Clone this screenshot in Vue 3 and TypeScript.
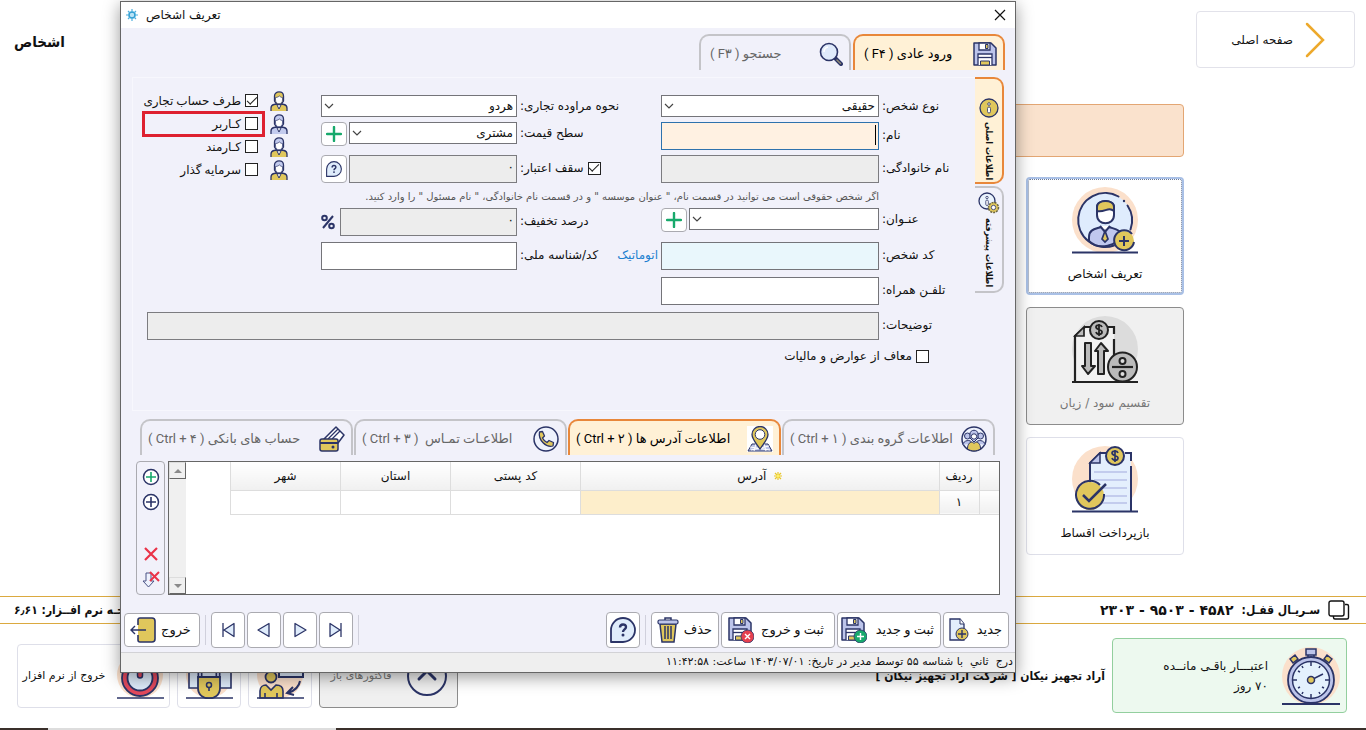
<script setup lang="ts">
import { ref } from 'vue'

interface Role { label: string; checked: boolean; hair: string; body: string; marked?: boolean }
interface Tab { label: string; icon: string }

const gold = '#e0c75c'
const lilac = '#c3cbee'

const roles = ref<Role[]>([
  { label: 'طرف حساب تجاری', checked: true, hair: gold, body: gold },
  { label: 'کـاربر', checked: false, hair: lilac, body: lilac, marked: true },
  { label: 'کـارمند', checked: false, hair: lilac, body: gold },
  { label: 'سرمایه گذار', checked: false, hair: lilac, body: gold },
])

const detailTabs: Tab[] = [
  { label: 'اطلاعات گروه بندی ( Ctrl + ۱ )', icon: 'group' },
  { label: 'اطلاعات آدرس ها ( Ctrl + ۲ )', icon: 'pin' },
  { label: 'اطلاعـات تمـاس \u00a0( Ctrl + ۳ )', icon: 'phone' },
  { label: 'حساب های بانکی ( Ctrl + ۴ )', icon: 'cards' },
]
const activeDetail = ref(1)
const creditLimit = ref(true)
const taxExempt = ref(false)
const pager: Tab[] = [
  { label: 'آخرین', icon: 'last' },
  { label: 'بعدی', icon: 'next' },
  { label: 'قبلی', icon: 'prev' },
  { label: 'اولین', icon: 'first' },
]
</script>

<template>
  <div class="page" dir="rtl">
    <svg class="defs" aria-hidden="true">
      <symbol id="save" viewBox="0 0 24 24">
        <path d="M1 1h17l5 5v17H1z" fill="#bcc4ea" stroke="#2b3467" stroke-width="1.5" stroke-linejoin="round" />
        <path d="M6 1h11v7H6z" fill="#fff" stroke="#2b3467" stroke-width="1.3" />
        <path d="M12.500 2.500h2.500v4h-2.500z" fill="#e0c75c" stroke="#2b3467" />
        <path d="M5 23V12h14v11" fill="#fff" stroke="#2b3467" stroke-width="1.3" />
        <path d="M5 15.500h14" stroke="#2b3467" stroke-width="1.300" />
        <path d="M7.500 23v-4h9v4z" fill="#e0c75c" stroke="#2b3467" />
      </symbol>
      <symbol id="search" viewBox="0 0 24 24">
        <path d="M16 16l6 6" stroke="#2b3467" stroke-width="4" stroke-linecap="round" />
        <path d="M18 18l3.500 3.500" stroke="#8f8a76" stroke-width="1.500" stroke-linecap="round" />
        <circle cx="10" cy="10" r="8.500" fill="#dfeafb" stroke="#2b3467" stroke-width="1.600" />
        <path d="M5 10a5 5 0 0 1 4-5" fill="none" stroke="#fff" stroke-width="1.500" />
      </symbol>
      <symbol id="plus" viewBox="0 0 16 16">
        <path d="M8 1v14M1 8h14" stroke="#17a96c" stroke-width="2.400" stroke-linecap="round" />
      </symbol>
      <symbol id="help" viewBox="0 0 26 26">
        <path d="M1 25V13a12 12 0 1 1 12 12z" fill="#dfecfb" stroke="#2b3467" stroke-width="1.800" stroke-linejoin="round" />
        <path d="M10 10.500c0-4 6-4 6-.5 0 2.500-3 2.300-3 5" fill="none" stroke="#2b3467" stroke-width="2.400" />
        <circle cx="13" cy="18" r="1.500" fill="#2b3467" />
      </symbol>
      <symbol id="group" viewBox="0 0 26 26">
        <circle cx="13" cy="13" r="12" fill="#eef2fd" stroke="#2b3467" stroke-width="1.500" />
        <g fill="#bcc4ea" stroke="#2b3467">
          <circle cx="6.500" cy="10" r="3" /><circle cx="19.500" cy="10" r="3" />
          <path d="M2 19c0-5 8-6 9-2M24 19c0-5-8-6-9-2" />
          <path d="M9 12V8c0-5 8-5 8 0v4l-4 4z" />
        </g>
        <circle cx="13" cy="10.500" r="2.700" fill="#fff" stroke="#2b3467" />
        <path d="M6.500 23c0-6 3-7 5-7l1.500 1.500L14.500 16c2 0 5 1 5 7-4 2.500-9 2.500-13 0z" fill="#e0c75c" stroke="#2b3467" />
      </symbol>
      <symbol id="pin" viewBox="0 0 26 26">
        <path d="M0 0h26v26H0z" fill="#fff" />
        <path d="M5 18h16l4 7H1z" fill="#bcc4ea" stroke="#2b3467" />
        <path d="M9 18l-2 7M17 18l2 7M3 21l20 3M22 20L4 24" stroke="#fff" />
        <path d="M13 23C9 17 5 13 5 8.500a8 8 0 0 1 16 0C21 13 17 17 13 23z" fill="#e0c75c" stroke="#2b3467" stroke-width="1.300" />
        <circle cx="13" cy="8.500" r="4.800" fill="#fff" stroke="#2b3467" />
      </symbol>
      <symbol id="phone" viewBox="0 0 26 26">
        <circle cx="13" cy="13" r="12" fill="#eef2fd" stroke="#2b3467" stroke-width="1.500" />
        <path d="M6.500 6l3-.500 2 4.500-2 2c1 2 2.500 3.500 4.500 4.500l2-2 4.500 2-.500 3.500c-7 2-15-6-13.500-14z" fill="#e0c75c" stroke="#2b3467" stroke-width="1.300" stroke-linejoin="round" />
      </symbol>
      <symbol id="cards" viewBox="0 0 26 26">
        <path d="M5 13L17 1l8 8-6 8z" fill="#fff" stroke="#2b3467" stroke-width="1.500" stroke-linejoin="round" />
        <path d="M9 13L19 3M13 13l8-8" stroke="#2b3467" stroke-width="1.300" />
        <rect x="1" y="13" width="18" height="12" rx="2" fill="#e0c75c" stroke="#2b3467" stroke-width="1.500" />
        <path d="M1 17h18" stroke="#2b3467" stroke-width="2" /><circle cx="14" cy="21" r="1.500" fill="#2b3467" />
      </symbol>
      <symbol id="person" viewBox="0 0 18 20">
        <path d="M1 20v-3c0-2 1-3 3-3.500l3-.5h4l3 .5c2 .5 3 1.500 3 3.500v3" style="fill: var(--body)" stroke="#2b3467" stroke-width="1.300" />
        <path d="M6.500 13L9 18l2.500-5" fill="#fff" stroke="#2b3467" />
        <path d="M4.500 10V5c0-5.500 9-5.500 9 0v5c-1 2-2 3-3 3.500h-3C6.500 13 5.500 12 4.500 10z" style="fill: var(--hair)" stroke="#2b3467" stroke-width="1.300" />
        <path d="M5.500 6.500C8 6.500 9 5 9.500 5c1 1 2 1.500 3 1.500V9c0 5-7 5-7 0z" fill="#fff" stroke="#2b3467" stroke-width=".7" />
      </symbol>
      <symbol id="first" viewBox="0 0 16 16"><path d="M3 1v14M14 1.500v13L4 8z" fill="#dfecfb" stroke="#2b3467" stroke-width="1.300" stroke-linejoin="round" /></symbol>
      <symbol id="last" viewBox="0 0 16 16"><path d="M13 1v14M2 1.500v13L12 8z" fill="#dfecfb" stroke="#2b3467" stroke-width="1.300" stroke-linejoin="round" /></symbol>
      <symbol id="next" viewBox="0 0 16 16"><path d="M3 1.500v13L14 8z" fill="#dfecfb" stroke="#2b3467" stroke-width="1.300" stroke-linejoin="round" /></symbol>
      <symbol id="prev" viewBox="0 0 16 16"><path d="M13 1.500v13L2 8z" fill="#dfecfb" stroke="#2b3467" stroke-width="1.300" stroke-linejoin="round" /></symbol>
      <symbol id="chevron" viewBox="0 0 10 6"><path d="M1 1l4 4 4-4" fill="none" stroke="#444" stroke-width="1.200" /></symbol>
    </svg>

    <header class="top">
      <button class="home" type="button">
        <svg width="20" height="36" viewBox="0 0 20 36"><path d="M2 2l16 16L2 34" fill="none" stroke="#eda92c" stroke-width="2.500" stroke-linecap="round" /></svg>
        <span>صفحه اصلی</span>
      </button>
      <h1>اشخاص</h1>
    </header>

    <main class="content">
      <div class="banner"></div>
      <nav class="cards">
        <button class="card focused" type="button">
          <svg width="66" height="67" viewBox="0 0 66 67">
            <circle cx="33" cy="33" r="33" fill="#fbe0cb" />
            <circle cx="33" cy="33" r="27" fill="#dfecfd" />
            <path d="M46.500 9.500A27 27 0 1 0 42 58.500M55.500 18.500a27 27 0 0 1 3 24" fill="none" stroke="#2b3467" stroke-width="2" stroke-linecap="round" />
            <circle cx="52" cy="14" r="1.200" fill="#2b3467" />
            <path d="M17 54v-4c0-8 7-8 12-10h8c5 2 12 2 12 9-3 9-22 15-32 5z" fill="#c0c8ee" stroke="#2b3467" stroke-width="2" />
            <path d="M28 39l5 6 5-6" fill="#fff" stroke="#2b3467" stroke-width="2" />
            <path d="M33 44l-3 8 3 3 3-3z" fill="#e0c75c" stroke="#2b3467" stroke-width="1.700" />
            <path d="M25 20c0-8 17-8 17 0v8c0 11-17 11-17 0z" fill="#fff" stroke="#2b3467" stroke-width="2" />
            <path d="M25 24v-4c0-8 17-8 17 0v4c-6-5-9 2-17 0z" fill="#e0c75c" stroke="#2b3467" stroke-width="2" />
            <circle cx="52" cy="54" r="10" fill="#e0c75c" /><path d="M60 47A10 10 0 1 0 62 55" fill="none" stroke="#2b3467" stroke-width="2" />
            <path d="M52 49v10M47 54h10" stroke="#2b3467" stroke-width="2" />
            <path d="M0 65.500h66" stroke="#2b3467" stroke-width="2" />
          </svg>
          <span>تعریف اشخاص</span>
        </button>
        <button class="card off" type="button" disabled>
          <svg width="66" height="67" viewBox="0 0 66 67">
            <circle cx="33" cy="33" r="33" fill="#dcdcdc" />
            <path d="M3 65V20l10-9h29v55H3z" fill="#f1f1f1" />
            <path d="M3 65V20l10-9h6M36 11h6v7M42 23v16" fill="none" stroke="#222" stroke-width="2.200" />
            <path d="M3 20h9v-9z" fill="#bbb" stroke="#222" stroke-width="1.700" />
            <circle cx="27" cy="14" r="9" fill="#bbb" stroke="#222" stroke-width="2" />
            <path d="M30 11c-1-3-6-2-6 0 0 3 6 2 6 5 0 3-5 3-6 0M27 8v12" fill="none" stroke="#222" stroke-width="1.800" />
            <path d="M13 27h6v23h4l-7 8-6-8h3zM26 58V35h-3l6-8 7 8h-4v23z" fill="#bbb" stroke="#222" stroke-width="2" stroke-linejoin="round" />
            <circle cx="50.500" cy="51" r="14.500" fill="#bbb" stroke="#222" stroke-width="2" />
            <path d="M40 51h21" stroke="#222" stroke-width="2.200" /><circle cx="50.500" cy="45" r="3" fill="#ddd" stroke="#222" stroke-width="2" /><circle cx="50.500" cy="58" r="3" fill="#ddd" stroke="#222" stroke-width="2" />
            <path d="M0 66h66" stroke="#222" stroke-width="2" />
          </svg>
          <span>تقسیم سود / زیان</span>
        </button>
        <button class="card" type="button">
          <svg width="66" height="67" viewBox="0 0 66 67">
            <circle cx="33" cy="33" r="33" fill="#fbe0cb" />
            <path d="M18 65V17L28 7h31v58z" fill="#e4effd" />
            <path d="M18 39V17L28 7h6M53 7h6v8M59 20v45" fill="none" stroke="#2b3467" stroke-width="2" />
            <path d="M18 17h10V7z" fill="#bcc4ea" stroke="#2b3467" stroke-width="1.500" />
            <path d="M22 26h33M22 34h33M30 42h25M32 50h23M30 57h25" stroke="#b8c1e8" stroke-width="1.500" />
            <circle cx="43" cy="10" r="9" fill="#e0c75c" stroke="#2b3467" stroke-width="2" />
            <path d="M46 7c-1-3-6-2-6 0 0 3 6 2 6 5 0 3-5 3-6 0M43 4v12" fill="none" stroke="#2b3467" stroke-width="1.700" />
            <circle cx="18" cy="50" r="14" fill="#e0c75c" /><path d="M28 39A14 14 0 1 0 32 48" fill="none" stroke="#2b3467" stroke-width="2" />
            <path d="M11 49l6 6 17-17" fill="none" stroke="#2b3467" stroke-width="2.500" />
            <path d="M0 65.500h66" stroke="#2b3467" stroke-width="2" />
          </svg>
          <span>بازپرداخت اقساط</span>
        </button>
      </nav>
    </main>

    <section class="serial">
      <div class="serial-id">
        <svg width="22" height="20" viewBox="0 0 22 20"><path d="M17 4.500h2a1.500 1.500 0 0 1 1.500 1.500v11.500a1.500 1.500 0 0 1-1.500 1.500H7a1.500 1.500 0 0 1-1.500-1.500V16" fill="none" stroke="#111" stroke-width="1.400" /><rect x="1" y="1" width="15" height="15" rx="2" fill="#fff" stroke="#111" stroke-width="1.400" /></svg>
        <b>سـریـال قفـل:</b>
        <b class="number">۴۵۸۲ - ۹۵۰۳ - ۲۳۰۳</b>
      </div>
      <b>نسخـه نرم افــزار: ۶٫۶۱</b>
    </section>

    <footer class="bottom">
      <div class="credit">
        <svg width="58" height="58" viewBox="0 0 58 58">
          <circle cx="29" cy="29" r="29" fill="#fbe0cb" />
          <path d="M24 2h10v6H24zM26 8h6v4h-6z" fill="#bcc4ea" stroke="#2b3467" stroke-width="1.500" />
          <path d="M8 12l5-4 3 4-5 4zM50 12l-5-4-3 4 5 4z" fill="#e0c75c" stroke="#2b3467" stroke-width="1.500" />
          <circle cx="29" cy="33" r="23" fill="#bcc4ea" stroke="#2b3467" stroke-width="1.800" />
          <circle cx="29" cy="33" r="18.500" fill="#e4f1fd" stroke="#2b3467" stroke-width="1.500" />
          <path d="M29 15v4M29 47v4M11 33h4M43 33h4M29 33l12-6M16 24l2 1M42 41l-2-1M16 41l2-1M20 19l1 2M38 19l-1 2M20 47l1-2M38 47l-1-2" stroke="#2b3467" stroke-width="1.500" />
          <circle cx="29" cy="33" r="3.500" fill="#e0c75c" stroke="#2b3467" stroke-width="1.500" />
          <path d="M0 57h58" stroke="#2b3467" stroke-width="2" />
        </svg>
        <p>اعتبـــار باقـی مانــده<br />۷۰ روز</p>
      </div>
      <b class="company">آراد تجهیز نیکان [ شرکت آراد تجهیز نیکان ]</b>
      <button class="tile off" type="button" disabled>
        <svg width="40" height="40" viewBox="0 0 40 40"><circle cx="20" cy="20" r="19" fill="none" stroke="#2b3467" stroke-width="2" /><path d="M12 23l8-8 8 8" fill="none" stroke="#2b3467" stroke-width="3" stroke-linecap="round" /></svg>
        <span>فاکتورهای باز</span>
      </button>
      <button class="tile icon-only" type="button" aria-label="تعویض کاربر">
        <svg width="47" height="47" viewBox="0 0 47 47">
          <circle cx="23" cy="23" r="23" fill="#fbe0cb" />
          <rect x="22" y="3" width="24" height="22" fill="#dfecfb" stroke="#2b3467" stroke-width="2" />
          <circle cx="14" cy="25" r="5.500" fill="#e0c75c" stroke="#2b3467" stroke-width="1.800" />
          <path d="M3 46v-7c0-4 3-6 6-6l5 5 5-5c4 0 7 2 7 6v7zM8 46v-5M20 46v-5" fill="#e0c75c" stroke="#2b3467" stroke-width="1.600" />
          <path d="M43 29c-1 6-6 10-12 12M36 35l-6 6 7 2" fill="none" stroke="#2b3467" stroke-width="2" />
          <path d="M0 46h47" stroke="#2b3467" stroke-width="1.600" />
        </svg>
      </button>
      <button class="tile icon-only" type="button" aria-label="قفل برنامه">
        <svg width="47" height="47" viewBox="0 0 47 47">
          <circle cx="23" cy="23" r="23" fill="#fbe0cb" />
          <path d="M3 4h42v32H3z" fill="#dfecfb" stroke="#2b3467" stroke-width="1.600" />
          <path d="M14 26v-9c0-11 18-11 18 0v9" fill="none" stroke="#2b3467" stroke-width="5" /><path d="M14 26v-9c0-11 18-11 18 0v9" fill="none" stroke="#bcc4ea" stroke-width="2" />
          <path d="M12 25h22v11c0 14-22 14-22 0z" fill="#e0c75c" stroke="#2b3467" stroke-width="1.800" />
          <circle cx="23" cy="33" r="2.500" fill="none" stroke="#2b3467" stroke-width="1.500" /><path d="M23 35v4M0 46h47" stroke="#2b3467" stroke-width="1.600" />
        </svg>
      </button>
      <button class="tile exit" type="button">
        <svg width="47" height="47" viewBox="0 0 47 47">
          <circle cx="23" cy="23" r="23" fill="#fbe0cb" />
          <circle cx="23" cy="26" r="18" fill="#e3495c" stroke="#2b3467" stroke-width="1.800" />
          <circle cx="23" cy="26" r="12.500" fill="#dfecfb" stroke="#2b3467" stroke-width="1.800" />
          <rect x="20.500" y="10" width="5" height="16" rx="2.500" fill="#e3495c" stroke="#2b3467" stroke-width="1.500" />
          <path d="M0 46h47" stroke="#2b3467" stroke-width="1.600" />
        </svg>
        <span>خروج از نرم افزار</span>
      </button>
    </footer>
    <div class="taskbar"></div>

    <section class="dialog" role="dialog" aria-labelledby="dialog-title">
      <div class="titlebar">
        <button class="close" type="button" aria-label="بستن">
          <svg width="12" height="12" viewBox="0 0 12 12"><path d="M1 1l10 10M11 1L1 11" stroke="#111" stroke-width="1.200" /></svg>
        </button>
        <h2 id="dialog-title">تعریف اشخاص</h2>
        <svg width="12" height="12" viewBox="0 0 12 12"><circle cx="6" cy="6" r="3" fill="#b9e3f6" stroke="#2d9bd0" stroke-width="1.500" /><path d="M6 0v3M6 9v3M0 6h3M9 6h3M2 2l2 2M8 8l2 2M10 2L8 4M4 8l-2 2" stroke="#4db0de" stroke-width="1.200" /></svg>
      </div>

      <div class="modes">
        <button class="tab mode active" type="button"><svg width="24" height="24"><use href="#save" /></svg><span>ورود عادی ( F۴ )</span></button>
        <button class="tab mode" type="button"><svg width="24" height="24"><use href="#search" /></svg><span>جستجو ( F۳ )</span></button>
      </div>

      <div class="sheet">
        <div class="side">
          <button class="side-tab active" type="button">
            <svg width="20" height="20" viewBox="0 0 20 20"><circle cx="10" cy="10" r="9" fill="#e0c75c" stroke="#2b3467" stroke-width="1.300" /><circle cx="10" cy="6" r="1.300" fill="#fff" stroke="#2b3467" stroke-width=".8" /><rect x="8.500" y="9" width="3" height="6" rx="1.500" fill="#fff" stroke="#2b3467" stroke-width=".8" /></svg>
            <span>اطلاعات اصلی</span>
          </button>
          <button class="side-tab" type="button">
            <svg width="22" height="22" viewBox="0 0 22 22"><circle cx="9" cy="9" r="8" fill="#eaf3fd" stroke="#2b3467" stroke-width="1.300" /><circle cx="9" cy="5.500" r="1.200" fill="#fff" stroke="#2b3467" stroke-width=".8" /><rect x="7.800" y="8" width="2.500" height="5.500" rx="1.200" fill="#fff" stroke="#2b3467" stroke-width=".8" /><circle cx="15.500" cy="15.500" r="5" fill="#e0c75c" stroke="#6b6644" stroke-width="1.500" stroke-dasharray="2 1" /><circle cx="15.500" cy="15.500" r="2.200" fill="#fff" stroke="#2b3467" stroke-width=".8" /></svg>
            <span>اطلاعات پیشرفته</span>
          </button>
        </div>

        <form class="form" @submit.prevent>
          <label class="lab r1 c1" for="kind">نوع شخص:</label>
          <div class="pick r1 c2"><select id="kind"><option>حقیقی</option></select><svg width="10" height="6"><use href="#chevron" /></svg></div>
          <label class="lab tall r2 c1" for="fname">نام:</label>
          <div class="current r2 c2"><input id="fname" type="text" /></div>
          <label class="lab tall r3 c1" for="lname">نام خانوادگی:</label>
          <div class="r3 c2"><input id="lname" class="gray" type="text" /></div>
          <p class="hint">اگر شخص حقوقی است می توانید در قسمت نام، " عنوان موسسه " و در قسمت نام خانوادگی، " نام مسئول " را وارد کنید.</p>
          <label class="lab r5 c1" for="honor">عنـوان:</label>
          <div class="pair r5 c2">
            <div class="pick"><select id="honor"><option></option></select><svg width="10" height="6"><use href="#chevron" /></svg></div>
            <button class="mini" type="button" aria-label="افزودن عنوان"><svg width="16" height="16"><use href="#plus" /></svg></button>
          </div>
          <label class="lab tall r6 c1" for="code">کد شخص:</label>
          <div class="r6 c2"><input id="code" class="aqua" type="text" /></div>
          <label class="lab tall r7 c1" for="mobile">تلفـن همراه:</label>
          <div class="r7 c2"><input id="mobile" type="text" /></div>
          <label class="lab tall r8 c1" for="note">توضیحات:</label>
          <div class="note"><input id="note" class="gray" type="text" /></div>
          <label class="tax"><input v-model="taxExempt" type="checkbox" />معاف از عوارض و مالیات</label>

          <label class="lab r1 c3" for="trade">نحوه مراوده تجاری:</label>
          <div class="pick r1 c4"><select id="trade"><option>هردو</option></select><svg width="10" height="6"><use href="#chevron" /></svg></div>
          <label class="lab r2 c3" for="level">سطح قیمت:</label>
          <div class="pair r2 c4">
            <div class="pick"><select id="level"><option>مشتری</option></select><svg width="10" height="6"><use href="#chevron" /></svg></div>
            <button class="mini" type="button" aria-label="افزودن سطح قیمت"><svg width="16" height="16"><use href="#plus" /></svg></button>
          </div>
          <label class="lab tall r3 c3"><input v-model="creditLimit" type="checkbox" />سقف اعتبار:</label>
          <div class="pair r3 c4">
            <input class="gray" type="text" value="۰" aria-label="سقف اعتبار" />
            <button class="mini high" type="button" aria-label="راهنما"><svg width="16" height="16"><use href="#help" /></svg></button>
          </div>
          <label class="lab tall r5 c3" for="off">درصد تخفیف:</label>
          <div class="pair percent r5 c4"><input id="off" class="gray" type="text" value="۰" />
            <svg width="14" height="16" viewBox="0 0 14 16"><g fill="none" stroke="#2b3467" stroke-width="2"><circle cx="3.500" cy="4" r="2.300" /><circle cx="10.500" cy="12" r="2.300" /><path d="M12 2L2 14" /></g></svg>
          </div>
          <label class="lab tall r6 c3" for="nid"><a class="auto" href="#">اتوماتیک</a>کد/شناسه ملی:</label>
          <div class="r6 c4"><input id="nid" type="text" /></div>

          <div class="roles">
            <label v-for="role in roles" :key="role.label" class="role" :class="{ marked: role.marked }">
              <svg width="18" height="20" :style="{ '--hair': role.hair, '--body': role.body }"><use href="#person" /></svg>
              <input v-model="role.checked" type="checkbox" />{{ role.label }}
            </label>
          </div>
        </form>
      </div>

      <div class="details">
        <button v-for="(tab, i) in detailTabs" :key="tab.icon" class="tab" :class="{ active: i === activeDetail }" type="button" @click="activeDetail = i">
          <svg width="26" height="26"><use :href="'#' + tab.icon" /></svg><span>{{ tab.label }}</span>
        </button>
      </div>

      <div class="grid-area">
        <div class="table-box">
          <table>
            <colgroup><col class="w-edge" /><col class="w-row" /><col /><col class="w-post" /><col class="w-place" /><col class="w-place" /></colgroup>
            <thead><tr><th></th><th>ردیف</th>
              <th><svg width="8" height="8" viewBox="0 0 8 8"><path d="M4 0v8M0 4h8M1 1l6 6M7 1L1 7" stroke="#e8c62a" stroke-width="1.200" /><circle cx="4" cy="4" r="1.700" fill="#fff06a" /></svg> آدرس</th>
              <th>کد پستی</th><th>استان</th><th>شهر</th></tr></thead>
            <tbody><tr><td class="fixed"></td><td class="fixed">۱</td><td class="cursor"></td><td></td><td></td><td></td></tr></tbody>
          </table>
          <div class="scroll">
            <button type="button" aria-label="بالا"><svg width="8" height="4" viewBox="0 0 8 4"><path d="M0 4l4-4 4 4z" fill="#8a8a8a" /></svg></button>
            <button type="button" aria-label="پایین"><svg width="8" height="4" viewBox="0 0 8 4"><path d="M0 0l4 4 4-4z" fill="#8a8a8a" /></svg></button>
          </div>
        </div>
        <div class="tools">
          <button type="button" aria-label="افزودن"><svg width="18" height="18" viewBox="0 0 18 18"><circle cx="9" cy="9" r="7.500" fill="#fff" stroke="#2b3467" stroke-width="1.500" /><path d="M9 4v10M4 9h10" stroke="#17a96c" stroke-width="1.600" /></svg></button>
          <button type="button" aria-label="درج"><svg width="18" height="18" viewBox="0 0 18 18"><circle cx="9" cy="9" r="7.500" fill="#fff" stroke="#2b3467" stroke-width="1.500" /><path d="M9 4v10M4 9h10" stroke="#2b3467" stroke-width="1.600" /></svg></button>
          <button class="apart" type="button" aria-label="حذف ردیف"><svg width="18" height="18" viewBox="0 0 18 18"><path d="M3 3l12 12M15 3L3 15" stroke="#ea3348" stroke-width="2.200" /></svg></button>
          <button type="button" aria-label="حذف همه"><svg width="18" height="18" viewBox="0 0 18 18"><path d="M4 3h5v8h3l-5.500 6L1 11h3z" fill="#eef2fd" stroke="#4a5285" /><path d="M8 2l9 9M17 2l-9 9" stroke="#ea3348" stroke-width="2" /></svg></button>
        </div>
      </div>

      <div class="actions">
        <button class="act" type="button"><svg width="20" height="24" viewBox="0 0 20 24"><path d="M1 1h10l4 5v16H1z" fill="#e3eefc" stroke="#2b3467" stroke-width="1.300" /><path d="M11 1v5h4" fill="#fff" stroke="#2b3467" /><circle cx="13" cy="16" r="6" fill="#e0c75c" stroke="#2b3467" /><path d="M13 12v8M9 16h8" stroke="#2b3467" stroke-width="1.400" /></svg><span>جدید</span></button>
        <button class="act mid" type="button"><svg width="26" height="26" viewBox="0 0 26 26"><use href="#save" width="24" height="24" /><circle cx="19.500" cy="19.500" r="6.500" fill="#17a96c" stroke="#2b3467" stroke-width=".8" /><path d="M19.500 16v7M16 19.500h7" stroke="#fff" stroke-width="1.400" /></svg><span>ثبت و جدید</span></button>
        <button class="act wide" type="button"><svg width="26" height="26" viewBox="0 0 26 26"><use href="#save" width="24" height="24" /><circle cx="19.500" cy="19.500" r="6.500" fill="#e5404f" stroke="#2b3467" stroke-width=".8" /><path d="M17 17l5 5M22 17l-5 5" stroke="#fff" stroke-width="1.400" /></svg><span>ثبت و خروج</span></button>
        <button class="act" type="button"><svg width="22" height="26" viewBox="0 0 22 26"><path d="M3 7h16l-2 18H5z" fill="#e0c75c" stroke="#2b3467" stroke-width="1.500" /><path d="M8 9v13M11 9v13M14 9v13" stroke="#2b3467" stroke-width="1.500" /><path d="M8 3V1h6v2" fill="none" stroke="#2b3467" stroke-width="1.500" /><rect x="1" y="3" width="20" height="4" rx="1.500" fill="#bcc4ea" stroke="#2b3467" stroke-width="1.200" /></svg><span>حذف</span></button>
        <i class="rule"></i>
        <button class="act square" type="button" aria-label="راهنما"><svg width="26" height="26"><use href="#help" /></svg></button>
        <span class="space"></span>
        <i class="rule"></i>
        <button v-for="p in pager" :key="p.icon" class="act square" type="button" :aria-label="p.label"><svg width="16" height="16"><use :href="'#' + p.icon" /></svg></button>
        <i class="rule"></i>
        <button class="act leave" type="button"><svg width="26" height="26" viewBox="0 0 26 26"><path d="M8 8V3c0-1 1-2 2-2h12c2 0 3 1 3 3v18c0 2-1 3-3 3H10c-1 0-2-1-2-2v-5" fill="#e0c75c" stroke="#2b3467" stroke-width="1.600" /><path d="M16 13H1M5 9l-4 4 4 4" fill="none" stroke="#2b3467" stroke-width="1.400" /></svg><span>خروج</span></button>
      </div>
      <div class="status">درج &nbsp;ثاني &nbsp;با شناسه ۵۵ توسط مدیر در تاریخ: ۱۴۰۳/۰۷/۰۱ ساعت: ۱۱:۴۲:۵۸</div>
    </section>
  </div>
</template>

<style>
html, body { background: #fff; }
</style>

<style scoped>
*, *::before, *::after { box-sizing: border-box; }
.page { position: relative; min-height: 100vh; display: flex; flex-direction: column; overflow: hidden; font: 12px/20px "DejaVu Sans", sans-serif; color: #111; }
.defs { position: absolute; width: 0; height: 0; }
button, input, select { font: inherit; color: inherit; margin: 0; }
button { padding: 0; background: #fff; cursor: default; }
svg { flex: none; display: block; }
h1, h2, p { margin: 0; }
b, h1 { font-family: "DejaVu Sans Condensed", "DejaVu Sans", sans-serif; }

.top { display: flex; justify-content: space-between; align-items: flex-start; padding: 11px 11px 0 14px; }
.home { width: 159px; height: 57px; border: 1px solid #e2e2ea; border-radius: 4px; display: flex; align-items: center; gap: 12px; padding-right: 29px; }
h1 { font-size: 15px; line-height: 20px; padding-top: 21px; }
.content { flex: 1; padding: 36px 182px 0; }
.banner { height: 53px; border: 1px solid #e3a673; border-radius: 4px; background: #fae2cd; margin-bottom: 20px; }
.cards { display: flex; flex-direction: column; gap: 12px; }
.card { width: 158px; height: 118px; border: 1px solid #dedfe9; border-radius: 4px; display: flex; flex-direction: column; align-items: center; padding-top: 8px; gap: 10px; }
.card.focused { border: 2px solid #a9c0e6; outline: 1px dotted #6a7a98; outline-offset: -3px; }
.off { background: #f0f0f0; border-color: #8c8c8c; color: #777; }

.serial { height: 28px; border-top: 1px solid #dba93f; border-bottom: 1px solid #dba93f; display: flex; justify-content: space-between; align-items: center; padding: 0 16px 0 14px; }
.serial-id { display: flex; align-items: center; gap: 8px; }
.number { font-family: "DejaVu Sans", sans-serif; font-size: 14px; }
.bottom { display: flex; align-items: center; gap: 7px; padding: 14px 19px 15px 17px; }
.credit { width: 235px; height: 75px; border: 1px solid #93cf9e; border-radius: 4px; background: #edf9ef; display: flex; align-items: center; gap: 14px; padding-right: 6px; }
.company { flex: 1; }
.tile { height: 64px; border: 1px solid #dedfe9; border-radius: 4px; display: flex; align-items: center; justify-content: center; gap: 15px; width: 139px; font-size: 11px; }
.tile.off { border-color: #8c8c8c; }
.tile.icon-only { width: 64px; }
.tile.exit { width: 153px; gap: 12px; }
.taskbar { height: 2px; background: linear-gradient(to right, #3a302b 48px, #ddd 48px, #ddd 336px, #3a302b 336px); }

.dialog { position: absolute; top: 1px; left: 120px; right: 350px; background: #f1f1fa; border: 1px solid #666; box-shadow: 0 4px 16px rgba(0, 0, 0, .4); }
.titlebar { height: 26px; background: #fff; display: flex; align-items: center; gap: 8px; padding: 0 9px 0 5px; }
.close { margin-left: auto; border: 0; padding: 0; }
h2 { font-size: 12px; font-weight: 400; }
.modes { display: flex; gap: 2px; padding: 6px 10px 0; }
.tab { flex: 1; height: 36px; border: 2px solid #c4c4c8; border-bottom: 0; border-radius: 10px 10px 0 0; background: #f1f1fa; color: #666; display: flex; align-items: center; justify-content: space-between; padding: 2px 6px 0; white-space: nowrap; font-family: Roboto, "DejaVu Sans", sans-serif; font-size: 13px; }
.tab.mode { flex: none; width: 152px; padding: 2px 6px 0 9px; }
.tab.active { background: #fff1d6; border-color: #e8873a; color: #000; }

.sheet { display: flex; padding: 7px 11px 0; }
.side { width: 29px; display: flex; flex-direction: column; gap: 2px; }
.side-tab { height: 107px; border: 2px solid #c4c4c8; border-left: 0; border-radius: 0 10px 10px 0; background: #f1f1fa; display: flex; flex-direction: column; align-items: center; padding: 4px 0 0; gap: 4px; font: 700 9px/14px "DejaVu Sans Condensed", "DejaVu Sans", sans-serif; }
.side-tab.active { border-color: #e8873a; background: #fff1d6; padding-top: 19px; }
.side-tab span { writing-mode: vertical-rl; white-space: nowrap; }
.form { flex: 1; min-width: 0; height: 334px; border: 1px solid #f7f7fd; border-right: 0; padding: 11px 0 0 14px; display: grid; grid-template-columns: 96px minmax(0, 218fr) 144px minmax(0, 196fr) 174px; grid-template-rows: 6px 27px 33px 34px 19px 34px 35px 35px 37px 20px; align-items: start; }
.c1 { grid-column: 1; } .c2 { grid-column: 2; } .c3 { grid-column: 3; } .c4 { grid-column: 4; }
.r1 { grid-row: 2; } .r2 { grid-row: 3; } .r3 { grid-row: 4; } .r5 { grid-row: 6; } .r6 { grid-row: 7; } .r7 { grid-row: 8; } .r8 { grid-row: 9; }
.lab { height: 22px; display: flex; align-items: center; justify-content: flex-end; padding-left: 3px; white-space: nowrap; }
.lab.tall { height: 26px; }
input[type=text] { display: block; width: 100%; height: 28px; border: 1px solid #747479; border-radius: 0; background: #fff; padding: 0 2px 4px; outline: 0; }
input.gray { background: #ededed; border-color: #7c7c80; }
.current { position: relative; }
.current input[type=text] { background: #fff1e2; border-color: #2e72ad; }
.current::after { content: ""; position: absolute; top: 3px; right: 3px; width: 1px; height: 20px; background: #000; }
input.aqua { background: #e9f7fc; }
.pick { position: relative; flex: 1; min-width: 0; }
.pick svg { position: absolute; left: 3px; top: 8px; pointer-events: none; }
select { display: block; appearance: none; width: 100%; height: 22px; border: 1px solid #747479; border-radius: 0; background: #fff; padding: 0 3px; line-height: 18px; outline: 0; }
.pair { display: flex; gap: 2px; }
.pair input[type=text] { flex: 1; min-width: 0; width: auto; }
.percent { align-items: center; gap: 5px; }
.mini { width: 26px; height: 24px; border: 1px solid #aaaab0; border-radius: 4px; display: flex; align-items: center; justify-content: center; }
.mini.high { height: 28px; }
.hint { grid-area: 5 / 2 / 6 / 6; font-size: 10px; line-height: 15px; color: #555; white-space: nowrap; }
.note { grid-area: 9 / 2 / 10 / 6; }
.tax { grid-area: 10 / 1 / 11 / 4; padding-right: 46px; display: flex; align-items: center; gap: 4px; line-height: 14px; }
.auto { color: #1c80d0; text-decoration: none; margin-left: auto; padding-right: 3px; }
input[type=checkbox] { appearance: none; flex: none; width: 13px; height: 13px; border: 1px solid #222; background: #fff; display: grid; place-items: center; }
input[type=checkbox]:checked::after { content: ""; width: 10px; height: 5px; border: solid #222; border-width: 0 0 1px 1px; transform: rotate(-45deg); margin-bottom: 3px; }
.lab input[type=checkbox] { margin-left: 4px; }
.roles { grid-area: 1 / 5 / 5 / 6; padding-right: 33px; font-family: Roboto, "DejaVu Sans", sans-serif; }
.role { position: relative; height: 23px; display: flex; align-items: center; gap: 4px; white-space: nowrap; }
.role svg { margin-left: 8px; }
.role.marked::after { content: ""; position: absolute; top: -1px; right: 23px; width: 123px; height: 26px; border: 3px solid #de2130; }

.details { display: flex; gap: 1px; padding: 8px 20px 0 19px; }
.grid-area { display: flex; gap: 3px; padding: 6px 15px 0; }
.table-box { flex: 1; height: 134px; border: 1px solid #666; background: #fff; display: flex; justify-content: space-between; }
table { flex: 1; align-self: flex-start; border-collapse: collapse; table-layout: fixed; margin-left: 44px; width: 100px; }
.w-edge { width: 20px; } .w-row { width: 40px; } .w-post { width: 130px; } .w-place { width: 110px; }
th, td { padding: 0; border-left: 1px solid #ddd; border-bottom: 1px solid #ddd; text-align: center; font-weight: 400; }
th { height: 28px; background: linear-gradient(#fff, #f0f0f0); }
th svg { display: inline-block; margin-left: 4px; }
td { height: 24px; }
.fixed { background: linear-gradient(#fff, #f0f0f0); }
.cursor { background: #fdeecb; }
.scroll { width: 17px; background: #f0f0f0; display: flex; flex-direction: column; justify-content: space-between; }
.scroll button { height: 17px; border: 1px solid #ddd; border-right-color: #666; border-bottom-color: #666; background: #f0f0f0; display: grid; place-items: center; }
.tools { width: 29px; border: 1px solid #aaaab0; border-radius: 4px; display: flex; flex-direction: column; align-items: center; padding: 6px 0; gap: 7px; }
.tools button { border: 0; background: none; }
.tools .apart { margin-top: auto; }

.actions { display: flex; align-items: center; gap: 2px; padding: 17px 6px 4px 3px; }
.act { height: 36px; min-width: 66px; border: 1px solid #aaaab0; border-radius: 4px; display: flex; flex-direction: row-reverse; align-items: center; justify-content: space-between; gap: 5px; padding: 0 6px 0 5px; white-space: nowrap; font-family: Roboto, "DejaVu Sans", sans-serif; font-size: 13px; }
.act.mid { min-width: 104px; padding: 0 6px 0 3px; }
.act.wide { min-width: 114px; padding: 0 10px 0 6px; }
.act.square { min-width: 34px; width: 34px; padding: 0; justify-content: center; }
.act.leave { height: 34px; min-width: 75px; padding-right: 8px; }
.space { flex: 1; }
.rule { width: 1px; height: 30px; margin: 0 3px; background: #d0d0dc; }
.status { height: 20px; border-top: 1px solid #d2d2d6; background: #efefef; padding: 0 2px; font-size: 11px; line-height: 18px; white-space: nowrap; }
</style>
